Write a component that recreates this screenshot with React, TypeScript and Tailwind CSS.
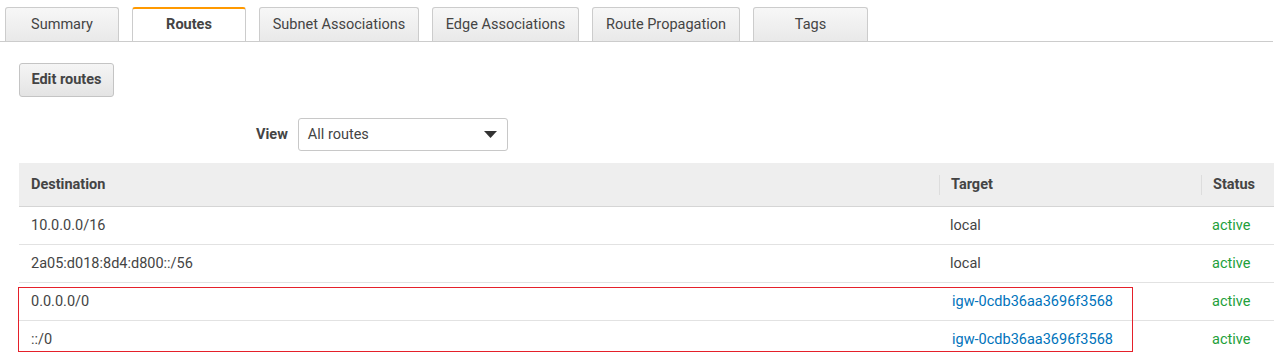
import React from "react";

const tabs = [
  { label: "Summary", w: "w-[114px]" },
  { label: "Routes", w: "w-[114px]", active: true },
  { label: "Subnet Associations", w: "w-[160px]" },
  { label: "Edge Associations", w: "w-[147px]" },
  { label: "Route Propagation", w: "w-[148px]" },
  { label: "Tags", w: "w-[115px]" },
];

const routes = [
  { dest: "10.0.0.0/16", target: "local", status: "active" },
  { dest: "2a05:d018:8d4:d800::/56", target: "local", status: "active" },
  { dest: "0.0.0.0/0", target: "igw-0cdb36aa3696f3568", link: true, status: "active" },
  { dest: "::/0", target: "igw-0cdb36aa3696f3568", link: true, status: "active" },
];

export default function App() {
  return (
    <div className="w-[1274px] h-[357px] overflow-hidden bg-white text-[14.5px] text-[#444]" style={{ fontFamily: "Roboto, 'Liberation Sans', sans-serif" }}>
      {/* tab strip */}
      <div className="flex gap-[13px] pl-[5px] pt-[7px] border-b border-[#cccccc] mr-[1px]">
        {tabs.map((t) => (
          <div
            key={t.label}
            className={
              t.active
                ? `${t.w} h-[34px] flex items-center justify-center rounded-t-[3px] border border-b-0 border-[#cccccc] border-t-2 border-t-[#f90] bg-white font-bold text-[#444]`
                : `${t.w} h-[34px] flex items-center justify-center rounded-t-[3px] border border-b-0 border-[#cccccc] bg-gradient-to-b from-[#f7f7f7] to-[#e9e9e9] text-[#444]`
            }
          >
            {t.label}
          </div>
        ))}
      </div>

      <div className="pl-[19px]">
        <button className="mt-[21px] w-[95px] h-[34px] rounded-[3px] border border-[#c4c4c4] bg-gradient-to-b from-[#f5f5f5] to-[#e4e4e4] font-bold text-[#444]">
          Edit routes
        </button>

        <div className="mt-[21px] flex items-center">
          <span className="ml-[237px] font-bold text-[#444]">View</span>
          <div className="ml-[10px] w-[210px] h-[33px] rounded-[3px] border border-[#c8c8c8] bg-white flex items-center justify-between pl-[9px] pr-[10px]">
            <span className="text-[#444]">All routes</span>
            <svg width="13" height="7" viewBox="0 0 13 7">
              <path d="M0 0H13L6.5 7Z" fill="#333" />
            </svg>
          </div>
        </div>

        {/* table */}
        <div className="relative mt-[12px] w-[1255px]">
          <div className="grid grid-cols-[920px_262px_73px] h-[44px] bg-[#eeeeee] border-b border-[#d5d5d5] font-bold text-[#444]">
            <div className="flex items-center pl-[12px] pt-px">Destination</div>
            <div className="flex items-center">
              <div className="w-px h-[20px] bg-[#dddddd]" />
              <span className="pl-[11px] pt-px">Target</span>
            </div>
            <div className="flex items-center">
              <div className="w-px h-[20px] bg-[#dddddd]" />
              <span className="pl-[11px] pt-px">Status</span>
            </div>
          </div>
          {routes.map((r, i) => (
            <div key={i} className="grid grid-cols-[920px_262px_73px] h-[38px] border-b border-[#e2e2e2] pt-px">
              <div className="flex items-center pl-[12px]">{r.dest}</div>
              <div className={`flex items-center ${r.link ? "pl-[13px] text-[#0073bb]" : "pl-[11px]"}`}>{r.target}</div>
              <div className="flex items-center pl-[11px] text-[#22a03a]">{r.status}</div>
            </div>
          ))}
          {/* annotation box */}
          <div className="absolute left-[-1px] top-[124px] w-[1115px] h-[65px] border border-[#e5202a] pointer-events-none" />
        </div>
      </div>
    </div>
  );
}
